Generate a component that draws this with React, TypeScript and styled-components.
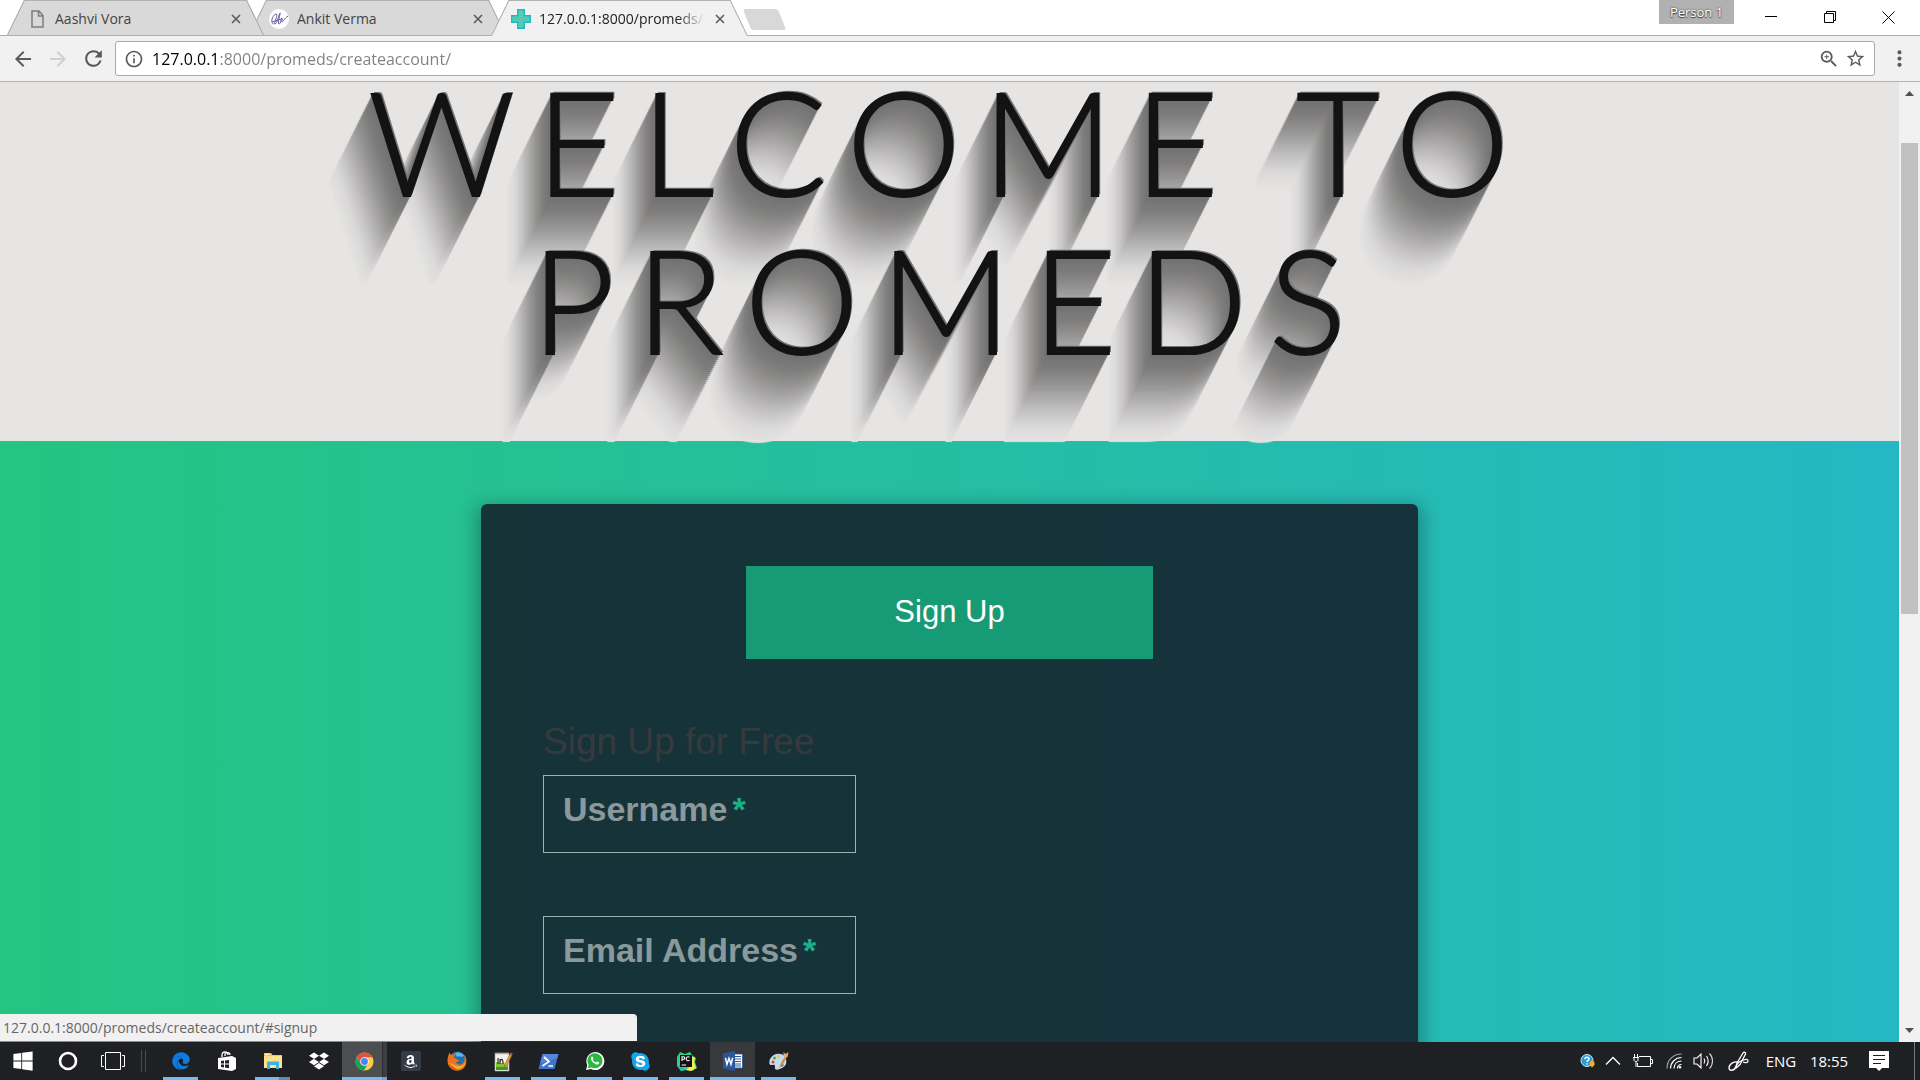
import React from "react";
import styled, { createGlobalStyle, css } from "styled-components";
import { FaAmazon, FaDropbox, FaEdge, FaSkype, FaWindows } from "react-icons/fa";
import {
  MdArrowBack,
  MdArrowForward,
  MdInfoOutline,
  MdMoreVert,
  MdRefresh,
  MdStarBorder,
  MdZoomIn,
} from "react-icons/md";

const uiFont = `"Segoe UI", "Open Sans", "Noto Sans", sans-serif`;
const bodyFont = `Arial, "Liberation Sans", sans-serif`;

const GlobalStyle = createGlobalStyle`
  *, *::before, *::after { box-sizing: border-box; }
  html, body { margin: 0; background: #fff; }
  button { border: 0; padding: 0; background: none; font: inherit; color: inherit; cursor: pointer; }
  h1, h2, p { margin: 0; font-weight: 400; }
  a { text-decoration: none; }
  svg { display: block; }
`;

/* Colour stops of the long shadow, from the letters outwards. */
const shadowStops = [
  [115, 114, 114],
  [127, 125, 125],
  [148, 147, 146],
  [173, 171, 171],
  [198, 196, 196],
  [219, 218, 217],
  [228, 227, 226],
];

const longShadow = (steps: number) => {
  const layers = ["1px -1px 0 #767676", "2px -2px 0 #767676"];
  for (let i = 1; i <= steps; i += 1) {
    const at = ((i - 1) / (steps - 1)) * (shadowStops.length - 1);
    const low = Math.min(Math.floor(at), shadowStops.length - 2);
    const rgb = shadowStops[low].map((c, k) =>
      Math.round(c + (shadowStops[low + 1][k] - c) * (at - low))
    );
    layers.push(`-${i}px ${i * 2}px 1px rgb(${rgb.join(",")})`);
  }
  return layers.join(", ");
};

const Screen = styled.div`
  display: flex;
  flex-direction: column;
  height: 100vh;
  overflow: hidden;
  font-family: ${uiFont};
`;

/* ---------- Browser frame ---------- */

const TabStrip = styled.header`
  display: flex;
  height: 36px;
  padding-left: 7px;
  background: #fff;
  border-bottom: 1px solid #adadad;
`;

const TabBox = styled.div<{ $active?: boolean; $level: number }>`
  position: relative;
  z-index: ${(p) => p.$level};
  isolation: isolate;
  display: flex;
  align-items: center;
  gap: 8px;
  width: 257px;
  height: ${(p) => (p.$active ? 36 : 35)}px;
  margin-right: -15px;
  padding: 2px 23px 0 20px;
  font-size: 14px;
  color: ${(p) => (p.$active ? "#222" : "#444")};

  &::before,
  &::after {
    content: "";
    position: absolute;
    z-index: -1;
    top: 0;
    bottom: 0;
    width: 65%;
    background: ${(p) => (p.$active ? "#f1f1f1" : "#d9d9d9")};
    border-top: 1px solid #b3b3b3;
  }
  &::before {
    left: 0;
    border-left: 1px solid #a6a6a6;
    transform: skewX(-26deg);
    transform-origin: bottom left;
  }
  &::after {
    right: 0;
    border-right: 1px solid #a6a6a6;
    transform: skewX(26deg);
    transform-origin: bottom right;
  }
`;

const TabIcon = styled.span`
  display: grid;
  place-items: center;
  width: 20px;
`;

const TabTitle = styled.button<{ $fade?: boolean }>`
  flex: 1;
  min-width: 0;
  overflow: hidden;
  text-align: left;
  white-space: nowrap;
  line-height: 20px;
  ${(p) =>
    p.$fade &&
    css`
      mask-image: linear-gradient(90deg, #000 82%, transparent 99%);
    `}
`;

const CloseButton = styled.button`
  width: 10px;
  height: 10px;
  color: #5a5a5a;
`;

const NewTab = styled.button`
  width: 35px;
  height: 21px;
  margin: 9px 0 0 14px;
  background: #d8d8d8;
  border-radius: 3px;
  transform: skewX(22deg);
`;

const WindowControls = styled.div`
  display: flex;
  align-items: flex-start;
  margin: 0 2px 0 auto;
`;

const PersonButton = styled.button`
  width: 75px;
  height: 24px;
  margin-right: 7px;
  background: #b1b1b1;
  color: #fff;
  font-size: 13px;
  line-height: 22px;
  text-shadow: 0 0 2px #333, 0 1px 1px #444;
`;

const WindowButton = styled.button`
  display: grid;
  place-items: center;
  width: 59px;
  height: 34px;
`;

const Toolbar = styled.nav`
  display: flex;
  align-items: center;
  height: 46px;
  padding: 0 13px 0 10px;
  background: #f1f1f1;
  border-bottom: 1px solid #b3b3b3;
`;

const ToolButton = styled.button<{ $width: number; $dim?: boolean }>`
  display: grid;
  place-items: center;
  width: ${(p) => p.$width}px;
  height: 34px;
  color: ${(p) => (p.$dim ? "#d0d0d0" : "#5a5a5a")};
`;

const AddressBar = styled.div`
  flex: 1;
  display: flex;
  align-items: center;
  height: 35px;
  margin: 0 12px 0 9px;
  padding: 0 5px 0 8px;
  background: #fff;
  border: 1px solid #a9a9a9;
  border-radius: 3px;
  color: #5a5a5a;
`;

const AddressInput = styled.input`
  flex: 1;
  min-width: 0;
  height: 30px;
  padding: 0;
  margin-left: 8px;
  border: 0;
  outline: 0;
  font: 16px/30px ${uiFont};
  color: transparent;
  background: linear-gradient(90deg, #000 68px, #808080 68px);
  background-clip: text;
`;

/* ---------- Page ---------- */

const Viewport = styled.div`
  position: relative;
  flex: 1;
  display: flex;
  min-height: 0;
`;

const Page = styled.main`
  flex: 1;
  display: flex;
  flex-direction: column;
  overflow: hidden;
  font-family: ${bodyFont};
  background: linear-gradient(to right, #25c481, #25b7c4);
`;

const Hero = styled.div`
  padding: 0 78px 63px;
  background: #e7e5e4;
`;

const HeroTitle = styled.h1`
  max-width: 1360px;
  margin: -20px auto 0;
  font-family: "Century Gothic", Lato, sans-serif;
  font-size: 144px;
  font-weight: 300;
  line-height: 158px;
  letter-spacing: 0.15em;
  text-align: center;
  text-transform: uppercase;
  color: #131313;
  -webkit-text-stroke: 2px #131313;
  text-shadow: ${longShadow(44)};
`;

const FormCard = styled.section`
  flex: 1;
  width: calc(100% - 124px);
  max-width: 937px;
  margin: 63px auto 0;
  padding: 62px;
  background: rgba(21, 35, 47, 0.9);
  border-radius: 6px;
  box-shadow: 0 6px 16px 6px rgba(19, 35, 47, 0.3);
`;

const SignUpTab = styled.a`
  display: block;
  width: 50%;
  margin: 0 auto 62px;
  padding: 23px 24px 25px;
  background: #179b77;
  color: #fff;
  font-size: 31px;
  line-height: 45px;
  text-align: center;
`;

const FormTitle = styled.h2`
  margin-bottom: 13px;
  color: #373a3c;
  font-size: 37px;
  line-height: 41px;
`;

const Field = styled.div`
  display: grid;
  width: 313px;
  margin-bottom: 63px;
`;

const FieldLabel = styled.label`
  grid-area: 1 / 1;
  z-index: 1;
  padding: 9px 20px;
  color: rgba(255, 255, 255, 0.5);
  font-size: 34px;
  font-weight: 700;
  line-height: 50px;
  pointer-events: none;
`;

const Required = styled.span`
  margin-left: 5px;
  color: #1ab188;
`;

const FieldInput = styled.input`
  grid-area: 1 / 1;
  width: 100%;
  height: 78px;
  padding: 8px 16px;
  background: none;
  border: 1px solid #a0b3b0;
  border-radius: 0;
  color: #fff;
  font: 34px ${bodyFont};
`;

const ScrollTrack = styled.div`
  display: flex;
  flex-direction: column;
  align-items: center;
  width: 21px;
  padding: 9px 0;
  background: #f1f1f1;
`;

const ScrollThumb = styled.div`
  width: 17px;
  height: 50%;
  margin: 47px 0 auto;
  background: #c1c1c1;
`;

const StatusBubble = styled.p`
  position: absolute;
  left: 0;
  bottom: 1px;
  width: 637px;
  height: 27px;
  padding: 0 3px;
  background: #f1f1f1;
  border-top-right-radius: 4px;
  color: #666;
  font-size: 14px;
  line-height: 27px;
`;

/* ---------- Taskbar ---------- */

const Taskbar = styled.footer`
  display: flex;
  height: 38px;
  background: #1f2023;
  color: #fff;
`;

const AppList = styled.div`
  display: flex;
  gap: 1px;
`;

const TaskButton = styled.button`
  display: grid;
  place-items: center;
  width: 45px;
  height: 38px;
`;

type AppState = "idle" | "running" | "stacked" | "active" | "lit";

const appBackground: Record<AppState, string> = {
  idle: "none",
  running: "linear-gradient(#76b9ed, #76b9ed) bottom center / 35px 3px no-repeat",
  stacked:
    "linear-gradient(90deg, #76b9ed 24px, #5b8db3 24px) bottom center / 35px 3px no-repeat",
  active: "linear-gradient(#76b9ed, #76b9ed) bottom center / 100% 3px no-repeat, #38393c",
  lit: `linear-gradient(90deg, #76b9ed 40px, #6aa5d3 40px) bottom center / 100% 3px no-repeat,
    linear-gradient(90deg, #4d4e50 40px, #2b2c2f 40px 41px, #3d3e41 41px)`,
};

const AppButton = styled(TaskButton)<{ $state: AppState }>`
  background: ${(p) => appBackground[p.$state]};
`;

const TaskDivider = styled.div`
  width: 5px;
  height: 22px;
  margin: 8px 12px 0 6px;
  border: solid #4b4c4e;
  border-width: 0 1px;
`;

const AmazonTile = styled.span`
  display: grid;
  place-items: center;
  width: 20px;
  height: 20px;
  border-radius: 2px;
  background: #353c47;
`;

const Tray = styled.div`
  display: flex;
  align-items: center;
  margin-left: auto;
  padding-right: 5px;
  font-size: 15px;
`;

const TrayButton = styled.button<{ $width: number }>`
  display: grid;
  place-items: center;
  width: ${(p) => p.$width}px;
  height: 38px;
`;

const DesktopEdge = styled.div`
  width: 1px;
  height: 38px;
  margin-left: 9px;
  background: #77787a;
`;

/* ---------- Drawings ---------- */

const CloseIcon = () => (
  <svg width="10" height="10" viewBox="0 0 10 10" stroke="currentColor" strokeWidth="1.6">
    <path d="M1 1l8 8M9 1L1 9" />
  </svg>
);

const FileIcon = () => (
  <svg width="15" height="20" viewBox="0 0 15 20" fill="none" stroke="#7c7c7c" strokeWidth="1.5">
    <path d="M2 2h7l4 4.500V18H2zM8.500 2v5H13" />
  </svg>
);

const SignatureIcon = () => (
  <svg width="20" height="20" viewBox="0 0 20 20" fill="none">
    <circle cx="10" cy="10" r="10" fill="#fff" />
    <path
      d="M5 15c-4 0-2-9 2-10 3 0-3 10-1 10s4-10 5-11-3 11-1 11 2-6 3-6-1 4 0 4 2-3 6-6M3 13l9-3"
      stroke="#62609a"
    />
  </svg>
);

const CrossIcon = () => (
  <svg width="20" height="20" viewBox="0 0 20 20">
    <path
      d="M6.700.700h6.600v6h6v6.600h-6v6H6.700v-6h-6V6.700h6z"
      fill="#56cbb0"
      stroke="#1fb9c6"
      strokeWidth="1.400"
    />
  </svg>
);

const CortanaIcon = () => (
  <svg width="20" height="20" viewBox="0 0 20 20" fill="none" stroke="#fff" strokeWidth="2.600">
    <circle cx="10" cy="10" r="8" />
  </svg>
);

const TaskViewIcon = () => (
  <svg width="24" height="20" viewBox="0 0 24 20" fill="none" stroke="#fff">
    <path d="M4.500 1.500h15v17h-15zM3 4.500H.5v11H3M21 4.500h2.500v11H21" />
  </svg>
);

const StoreIcon = () => (
  <svg width="20" height="21" viewBox="0 0 20 21">
    <path d="M5 6V4c0-2 1-3 3-3s3 1 3 3M8 5V3c1-2 5-2 5 1" fill="none" stroke="#fff" strokeWidth="1.300" />
    <path d="M1 7l14-2 4 2v11l-4 2-14-2z" fill="#fff" />
    <path d="M4 10l3-.400v3H4zM8 9.500l4-.600v3.700H8zM4 13.500h3v3l-3-.400zM8 13.500h4v3.700l-4-.600z" fill="#1f2023" />
  </svg>
);

const ExplorerIcon = () => (
  <svg width="20" height="18" viewBox="0 0 20 18">
    <path d="M1 1h7l1.500 2H19v13H1z" fill="#f5c84c" />
    <path d="M1 4h18v12H1z" fill="#fde28d" />
    <path d="M4 17V9.500h12V17h-3v-4H7v4z" fill="#3fb1e5" />
    <path d="M2 2.300h4" stroke="#fff" />
  </svg>
);

const ChromeIcon = () => (
  <svg width="19" height="19" viewBox="0 0 20 20">
    <circle cx="10" cy="10" r="9.500" fill="#fc4" />
    <path d="M10 5.600h8.400A9.500 9.500 0 0 0 1.800 5.200l4.400 7z" fill="#de5246" />
    <path d="M1.600 5.500A9.500 9.500 0 0 0 9.400 19.500l4-7-6.500.500z" fill="#15a260" />
    <circle cx="10" cy="10" r="4.500" fill="#fff" />
    <circle cx="10" cy="10" r="3.600" fill="#4a86ee" />
  </svg>
);

const FirefoxIcon = () => (
  <svg width="20" height="20" viewBox="0 0 20 20">
    <circle cx="10.500" cy="9" r="8.500" fill="#236fae" />
    <path d="M8 2c3-1.500 8 0 9 3l-3 1-2-1-2 1z" fill="#5dbbe0" />
    <path
      d="M2 3c-2 4-2 9 0 12 4 7 15 6 17-2 1-4 0-8-2-9 1 3 1 6-1 8-3 3-7 1-7-1 2 0 3-1 3-2-2 0-3-2-5-2 0-2 1-3 2-4-2 0-3 0-4 1-1 0-2-1-3-3z"
      fill="#e8731c"
    />
    <path d="M1.500 12c2 5 8 8 13 5 2-1 4-4 4-6-1 2-3 4-6 4-5 0-7-3-11-3z" fill="#f6ac28" />
    <path d="M2 12c1 4 5 7 9 7-3-2-6-3-9-7z" fill="#d43b23" />
  </svg>
);

const NotepadIcon = () => (
  <svg width="20" height="21" viewBox="0 0 20 21">
    <path d="M2 2h14v18H2z" fill="#f4f4ec" stroke="#aaa" strokeWidth=".6" />
    <path d="M3 11l12 2v6H3z" fill="#7cc52e" />
    <path d="M3 16h12v3H3z" fill="#3f9a25" />
    <path d="M2.500 2.500h13" stroke="#777" strokeWidth="1.600" strokeDasharray="1 1" />
    <path d="M5 7v6M7 8v5c0-6 3-6 3-1v1" fill="none" stroke="#2d2d2d" strokeWidth="1.200" />
    <path d="M11.500 14L17 3l2 1-5.500 11-2.200 1.200z" fill="#e5a93c" stroke="#8a5a22" strokeWidth=".6" />
    <path d="M17 3l.8-1.500 2 1L19 4z" fill="#c54d47" />
  </svg>
);

const PowerShellIcon = () => (
  <svg width="21" height="17" viewBox="0 0 21 17">
    <path d="M4.500 1H20.500L16.500 16H.500z" fill="#3f74cf" />
    <path d="M4.500 1H20.500l-1 4L2 10z" fill="#6493dc" opacity=".6" />
    <path d="M6 4l5 4.500-6.500 4.500M10.500 13h4.500" fill="none" stroke="#fff" strokeWidth="1.700" />
  </svg>
);

const WhatsAppIcon = () => (
  <svg width="20" height="20" viewBox="0 0 20 20">
    <path d="M1 19l1.300-4.800A9 9 0 1 1 6 18z" fill="#fff" />
    <path d="M2.700 17.300l1-3.400A7.500 7.500 0 1 1 6.500 16.400z" fill="#2bb741" />
    <path
      d="M7 5.500c-2 1.500-1 3.500 1 5.700 2.300 2.200 4.700 3.300 6 1.300.500-.700.300-1-.300-1.300l-1.700-.800-1.200 1.200c-1.500-.500-2.700-1.600-3.200-3L8.500 7.500 7.800 5.700z"
      fill="#fff"
    />
  </svg>
);

const SkypeTile = styled.span`
  display: grid;
  place-items: center;
  border-radius: 50%;
  background: radial-gradient(#fff 45%, transparent 46%);
`;

const PyCharmIcon = () => (
  <svg width="21" height="21" viewBox="0 0 21 21">
    <path d="M1 6l3-5 5 2 5-2 2 3 4 3-1 4 2 6-5 3-6-1-5 1-4-5z" fill="#2fd384" />
    <path d="M13 4l6 3-1 4 2 6-5 3-5-1 6-6z" fill="#f3ee4c" />
    <path d="M1 14l4 6 4-1-4-5z" fill="#1fb9c9" />
    <path d="M4 4h12v12H4z" fill="#111" />
    <path d="M6 10V5.700h1.500a1.300 1.300 0 0 1 0 2.600H6M13.500 6.300c-2-1.300-3.500.2-3.300 1.700.2 1.800 2 2.300 3.300 1.200M5.700 14h4.500" fill="none" stroke="#fff" strokeWidth="1.100" />
  </svg>
);

const WordIcon = () => (
  <svg width="20" height="20" viewBox="0 0 20 20">
    <path d="M10 3h9.500v14H10z" fill="#fff" stroke="#2b579a" strokeWidth=".8" />
    <path d="M12 5.500h6M12 8h6M12 10.500h6M12 13h6M12 15h6" stroke="#2b579a" strokeWidth="1.200" />
    <path d="M0 2.500L12 0v20L0 17.500z" fill="#2b579a" />
    <path d="M2.500 6.800l1.500 6.500 2-6 2 6 1.700-6.500" fill="none" stroke="#fff" strokeWidth="1.500" />
  </svg>
);

const PaintIcon = () => (
  <svg width="21" height="20" viewBox="0 0 21 20">
    <path d="M2 8c3-6 12-7 15-2s1 10-5 12-5-1-5-3-2-1-4-1-2-3-1-6z" fill="#c5dcea" />
    <circle cx="5" cy="11" r="1.500" fill="#d8413c" />
    <circle cx="6.500" cy="7" r="1.500" fill="#57a844" />
    <circle cx="10.500" cy="5.500" r="1.500" fill="#e9c73b" />
    <circle cx="14" cy="14" r="1.700" fill="#4a84c9" />
    <path d="M11 18c1-4 3-9 6-12l1.500 1C16 11 14 15 11 18z" fill="#d68b42" />
    <path d="M15.500 1l2 2 3-2-1 5-2.500 1-1.500-2z" fill="#d7ae7c" />
  </svg>
);

const HelpBadgeIcon = () => (
  <svg width="15" height="14" viewBox="0 0 15 14">
    <circle cx="7" cy="6.500" r="6" fill="#2b98d4" stroke="#cdeafa" />
    <path d="M5 5.200C5 2.600 9 2.700 9 5c0 1.500-2 1.400-2 3M7 9.200v1.300" fill="none" stroke="#fff" strokeWidth="1.500" />
    <path d="M12 6.500l2.500 1.500v3L12 13.500 9.700 11V8z" fill="#f2ae2b" />
  </svg>
);

const ChevronUpIcon = () => (
  <svg width="16" height="10" viewBox="0 0 16 10" fill="none" stroke="#fff" strokeWidth="1.300">
    <path d="M1 8.500L8 1.500l7 7" />
  </svg>
);

const BatteryIcon = () => (
  <svg width="20" height="14" viewBox="0 0 20 14" fill="none" stroke="#fff">
    <path d="M6 2.500h11.500v10H4.500V9M17.500 5.500h2v4h-2" />
    <path d="M1.500 0v3M4.500 0v3M0 3.500h6M1 4v2c0 1 1 1.500 2 1.500S5 7 5 6V4M3 7.500V13" />
  </svg>
);

const WifiIcon = () => (
  <svg width="16" height="16" viewBox="0 0 16 16" fill="none" stroke="#fff" strokeWidth="1.200">
    <path d="M1 15.500C1 7 7 1 15.500 1" opacity=".6" />
    <path d="M4.500 15.500c0-6 5-11 11-11M8 15.500C8 11 11 8 15.500 8" />
    <path d="M11.500 15.500c0-2 1-4 4-4" />
    <circle cx="14" cy="14.300" r="1.200" fill="#fff" stroke="none" />
  </svg>
);

const VolumeIcon = () => (
  <svg width="21" height="18" viewBox="0 0 21 18" fill="none" stroke="#fff" strokeWidth="1.100">
    <path d="M1 6h3l4-4v14l-4-4H1zM11 6.500c1 1.500 1 3.500 0 5M13.500 4c2 3 2 7 0 10" />
    <path d="M16.500 1.500c4 4 4 11 0 15" opacity=".8" />
  </svg>
);

const InkIcon = () => (
  <svg width="21" height="21" viewBox="0 0 21 21" fill="none" stroke="#fff" strokeWidth="1.300">
    <path d="M8 16l1-4 6-10c1-1.500 3-.500 2.500 1L12 13.500 8 17z" />
    <path d="M10 11c-4-1-9 2-9 6 0 3 5 3 6 0 1-2 3-6 6-7s7-3 7 0c0 2-3 2-5 1" />
  </svg>
);

const NotesIcon = () => (
  <svg width="20" height="20" viewBox="0 0 20 20">
    <path d="M0 0h20v17h-7l-3 3-3-3H0z" fill="#fff" />
    <path d="M4 4.500h12M4 8.500h12M4 12.500h8" stroke="#1f2023" />
  </svg>
);

const ArrowIcon = ({ down }: { down?: boolean }) => (
  <svg width="9" height="5" viewBox="0 0 9 5" fill="#505050">
    <path d={down ? "M0 0h9L4.500 5z" : "M0 5h9L4.500 0z"} />
  </svg>
);

/* ---------- Composition ---------- */

type TabProps = { title: string; icon: React.ReactNode; level: number; active?: boolean };

const Tab = ({ title, icon, level, active }: TabProps) => (
  <TabBox $active={active} $level={level}>
    <TabIcon>{icon}</TabIcon>
    <TabTitle $fade={active}>{title}</TabTitle>
    <CloseButton aria-label="Close tab">
      <CloseIcon />
    </CloseButton>
  </TabBox>
);

const FormField = ({ id, label, type }: { id: string; label: string; type: string }) => (
  <Field>
    <FieldLabel htmlFor={id}>
      {label}
      <Required>*</Required>
    </FieldLabel>
    <FieldInput id={id} type={type} required autoComplete="off" />
  </Field>
);

const apps: { name: string; icon: React.ReactNode; state: AppState }[] = [
  { name: "Edge", icon: <FaEdge size={18} color="#0f7bdc" />, state: "running" },
  { name: "Store", icon: <StoreIcon />, state: "idle" },
  { name: "File Explorer", icon: <ExplorerIcon />, state: "stacked" },
  { name: "Dropbox", icon: <FaDropbox size={20} />, state: "idle" },
  { name: "Chrome", icon: <ChromeIcon />, state: "lit" },
  {
    name: "Amazon",
    icon: (
      <AmazonTile>
        <FaAmazon size={15} />
      </AmazonTile>
    ),
    state: "idle",
  },
  { name: "Firefox", icon: <FirefoxIcon />, state: "idle" },
  { name: "Notepad++", icon: <NotepadIcon />, state: "running" },
  { name: "PowerShell", icon: <PowerShellIcon />, state: "running" },
  { name: "WhatsApp", icon: <WhatsAppIcon />, state: "running" },
  {
    name: "Skype",
    icon: (
      <SkypeTile>
        <FaSkype size={21} color="#12a5e8" />
      </SkypeTile>
    ),
    state: "running",
  },
  { name: "PyCharm", icon: <PyCharmIcon />, state: "running" },
  { name: "Word", icon: <WordIcon />, state: "active" },
  { name: "Paint", icon: <PaintIcon />, state: "running" },
];

export default function App() {
  return (
    <Screen>
      <GlobalStyle />
      <TabStrip>
        <Tab title="Aashvi Vora" icon={<FileIcon />} level={2} />
        <Tab title="Ankit Verma" icon={<SignatureIcon />} level={1} />
        <Tab title="127.0.0.1:8000/promeds/" icon={<CrossIcon />} level={3} active />
        <NewTab aria-label="New tab" />
        <WindowControls>
          <PersonButton>Person 1</PersonButton>
          <WindowButton aria-label="Minimize">
            <svg width="12" height="12" viewBox="0 0 12 12" stroke="#000">
              <path d="M0 5.500h12" />
            </svg>
          </WindowButton>
          <WindowButton aria-label="Restore">
            <svg width="12" height="12" viewBox="0 0 12 12" stroke="#000" fill="none">
              <path d="M.5 2.500h9v9h-9zM2.500 2V.5h9v9H10" />
            </svg>
          </WindowButton>
          <WindowButton aria-label="Close">
            <svg width="13" height="13" viewBox="0 0 13 13" stroke="#000">
              <path d="M.5.5l12 12M12.500.5l-12 12" />
            </svg>
          </WindowButton>
        </WindowControls>
      </TabStrip>

      <Toolbar>
        <ToolButton $width={26} aria-label="Back">
          <MdArrowBack size={24} />
        </ToolButton>
        <ToolButton $width={44} $dim aria-label="Forward">
          <MdArrowForward size={24} />
        </ToolButton>
        <ToolButton $width={26} aria-label="Reload">
          <MdRefresh size={25} />
        </ToolButton>
        <AddressBar>
          <MdInfoOutline size={20} />
          <AddressInput aria-label="Address" defaultValue="127.0.0.1:8000/promeds/createaccount/" />
          <ToolButton $width={27} aria-label="Zoom">
            <MdZoomIn size={22} />
          </ToolButton>
          <ToolButton $width={27} aria-label="Bookmark">
            <MdStarBorder size={21} />
          </ToolButton>
        </AddressBar>
        <ToolButton $width={20} aria-label="Menu">
          <MdMoreVert size={25} />
        </ToolButton>
      </Toolbar>

      <Viewport>
        <Page>
          <Hero>
            <HeroTitle>Welcome to Promeds</HeroTitle>
          </Hero>
          <FormCard id="signup">
            <SignUpTab href="#signup">Sign Up</SignUpTab>
            <FormTitle>Sign Up for Free</FormTitle>
            <FormField id="username" label="Username" type="text" />
            <FormField id="email" label="Email Address" type="email" />
          </FormCard>
        </Page>
        <ScrollTrack>
          <ArrowIcon />
          <ScrollThumb />
          <ArrowIcon down />
        </ScrollTrack>
        <StatusBubble>127.0.0.1:8000/promeds/createaccount/#signup</StatusBubble>
      </Viewport>

      <Taskbar>
        <TaskButton aria-label="Start">
          <FaWindows size={22} />
        </TaskButton>
        <TaskButton aria-label="Cortana">
          <CortanaIcon />
        </TaskButton>
        <TaskButton aria-label="Task view">
          <TaskViewIcon />
        </TaskButton>
        <TaskDivider />
        <AppList>
          {apps.map((app) => (
            <AppButton key={app.name} aria-label={app.name} $state={app.state}>
              {app.icon}
            </AppButton>
          ))}
        </AppList>
        <Tray>
          <TrayButton $width={26} aria-label="Help">
            <HelpBadgeIcon />
          </TrayButton>
          <TrayButton $width={26} aria-label="Show hidden icons">
            <ChevronUpIcon />
          </TrayButton>
          <TrayButton $width={34} aria-label="Battery">
            <BatteryIcon />
          </TrayButton>
          <TrayButton $width={27} aria-label="Network">
            <WifiIcon />
          </TrayButton>
          <TrayButton $width={32} aria-label="Volume">
            <VolumeIcon />
          </TrayButton>
          <TrayButton $width={38} aria-label="Ink workspace">
            <InkIcon />
          </TrayButton>
          <TrayButton $width={48}>ENG</TrayButton>
          <TrayButton $width={48}>18:55</TrayButton>
          <TrayButton $width={52} aria-label="Notifications">
            <NotesIcon />
          </TrayButton>
          <DesktopEdge />
        </Tray>
      </Taskbar>
    </Screen>
  );
}
